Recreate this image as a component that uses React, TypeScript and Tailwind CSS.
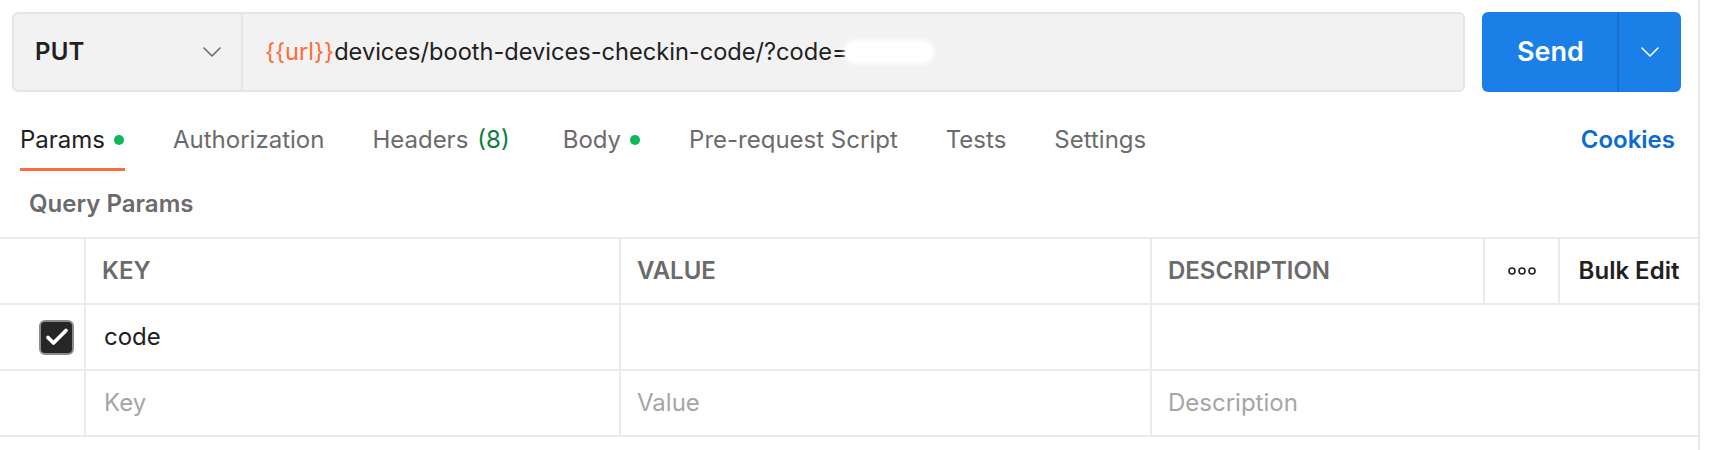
import { useState } from 'react';

const TABS = [
  { label: 'Params', dot: true },
  { label: 'Authorization' },
  { label: 'Headers', count: '(8)' },
  { label: 'Body', dot: true },
  { label: 'Pre-request Script' },
  { label: 'Tests' },
  { label: 'Settings' },
];

function Chevron({ className }: { className?: string }) {
  return (
    <svg width="18" height="10" viewBox="0 0 18 10" fill="none" className={className}>
      <path d="M1 1l8 8 8-8" stroke="currentColor" strokeWidth="1.6" strokeLinecap="round" strokeLinejoin="round" />
    </svg>
  );
}

function Dots() {
  return (
    <svg width="28" height="8" viewBox="0 0 28 8" fill="none">
      <circle cx="4" cy="4" r="3" stroke="#212121" strokeWidth="1.6" />
      <circle cx="14" cy="4" r="3" stroke="#212121" strokeWidth="1.6" />
      <circle cx="24" cy="4" r="3" stroke="#212121" strokeWidth="1.6" />
    </svg>
  );
}

function CheckBox({ checked }: { checked: boolean }) {
  return (
    <span className="flex h-[35px] w-[35px] items-center justify-center rounded-[6px] border-2 border-[#8c8c8c] bg-[#262626]">
      {checked ? (
        <svg width="24" height="20" viewBox="0 0 24 20" fill="none">
          <path d="M3 10.5l5.5 5.5L21 3.5" stroke="#fff" strokeWidth="3.8" strokeLinecap="round" strokeLinejoin="round" />
        </svg>
      ) : null}
    </span>
  );
}

export default function App() {
  const [active] = useState('Params');

  return (
    <div className="flex h-[450px] w-[1714px] bg-white font-['Inter','Liberation_Sans',sans-serif] text-[#212121]">
      <div className="w-[1700px] border-r-2 border-[#e8e8e8]">
        {/* request bar */}
        <div className="flex gap-[17px] pt-[12px] pl-[12px] pr-[17px]">
          <div className="flex h-[80px] flex-1 rounded-[6px] border-2 border-[#e6e6e6] bg-[#f2f2f2]">
            <div className="flex w-[229px] items-center justify-between border-r-2 border-[#e6e6e6] pl-[21px] pr-[20px]">
              <span className="text-[24px] font-semibold tracking-[0.2px]">PUT</span>
              <Chevron className="text-[#6b6b6b]" />
            </div>
            <div className="flex items-center pl-[22px] text-[23.6px]">
              <span className="text-[#ff6c37]">{'{{url}}'}</span>
              <span>devices/booth-devices-checkin-code/?code=</span>
              <span className="-ml-[4px] h-[24px] w-[90px] rounded-full bg-white blur-[2px]" />
            </div>
          </div>
          <div className="flex h-[80px] w-[199px] overflow-hidden rounded-[6px] bg-[#1a80e8] text-white">
            <div className="flex w-[135px] items-center justify-center pl-[2px] text-[27px] font-semibold">
              Send
            </div>
            <div className="flex flex-1 items-center justify-center border-l-2 border-[#1770d0]">
              <Chevron />
            </div>
          </div>
        </div>

        {/* tabs */}
        <div className="flex items-end justify-between pt-[34px] pl-[20px] pr-[23px]">
          <div className="flex gap-[48px]">
            {TABS.map((t) => (
              <div
                key={t.label}
                className={`flex h-[45px] items-start gap-[9px] border-b-[3px] text-[24px] leading-[28px] ${
                  active === t.label ? 'border-[#ff6c37] text-[#212121]' : 'border-transparent text-[#6b6b6b]'
                } ${t.label === 'Headers' ? 'pr-[5px]' : ''} ${t.dot ? 'pr-[1px]' : ''}`}
              >
                <span>{t.label}</span>
                {t.count ? <span className="text-[#0a7f38]">{t.count}</span> : null}
                {t.dot ? <span className="mt-[9px] h-[10px] w-[10px] rounded-full bg-[#0cb954]" /> : null}
              </div>
            ))}
          </div>
          <span className="mb-[17px] text-[24px] font-semibold leading-[28px] text-[#0b6bd1]">Cookies</span>
        </div>

        <div className="pt-[19px] pl-[29px] pb-[19px] text-[24px] font-semibold leading-[28px] text-[#6b6b6b]">
          Query Params
        </div>

        {/* params table */}
        <div className="border-t-2 border-[#ebebeb] text-[24px]">
          <div className="flex h-[66px] border-b-2 border-[#ebebeb] font-semibold text-[#6b6b6b]">
            <div className="w-[86px] border-r-2 border-[#ebebeb]" />
            <div className="flex w-[535px] items-center border-r-2 border-[#ebebeb] pl-[16px]">KEY</div>
            <div className="flex w-[531px] items-center border-r-2 border-[#ebebeb] pl-[16px]">VALUE</div>
            <div className="flex w-[333px] items-center border-r-2 border-[#ebebeb] pl-[16px]">DESCRIPTION</div>
            <div className="flex w-[75px] items-center justify-center border-r-2 border-[#ebebeb]">
              <Dots />
            </div>
            <div className="flex flex-1 items-center justify-center text-[#212121]">Bulk Edit</div>
          </div>
          <div className="flex h-[66px] border-b-2 border-[#ebebeb]">
            <div className="flex w-[86px] items-center justify-end border-r-2 border-[#ebebeb] pr-[10px]">
              <CheckBox checked />
            </div>
            <div className="flex w-[535px] items-center border-r-2 border-[#ebebeb] pl-[18px]">code</div>
            <div className="w-[531px] border-r-2 border-[#ebebeb]" />
            <div className="flex-1" />
          </div>
          <div className="flex h-[66px] border-b-2 border-[#ebebeb] text-[#a6a6a6]">
            <div className="w-[86px] border-r-2 border-[#ebebeb]" />
            <div className="flex w-[535px] items-center border-r-2 border-[#ebebeb] pl-[18px]">Key</div>
            <div className="flex w-[531px] items-center border-r-2 border-[#ebebeb] pl-[16px]">Value</div>
            <div className="flex flex-1 items-center pl-[16px]">Description</div>
          </div>
        </div>
      </div>
    </div>
  );
}
